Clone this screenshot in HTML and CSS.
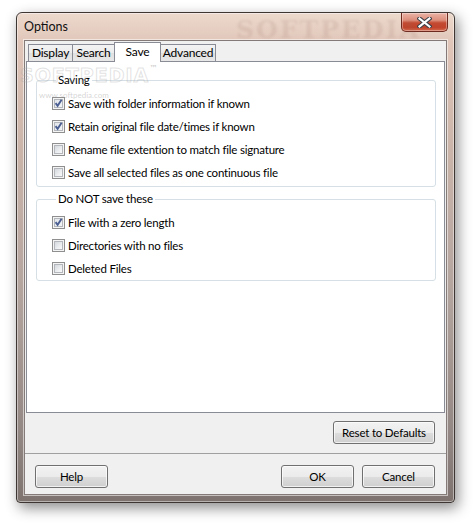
FILE: index.html
```html
<!DOCTYPE html>
<html>
<head>
<meta charset="utf-8">
<title>Options</title>
<link rel="stylesheet" href="styles.css">
</head>
<body>
<div class="window">
  <div class="titlebar">
    <span class="title">Options</span>
    <span class="wm-title">SOFTPEDIA</span>
    <div class="close">
      <svg width="15" height="11" viewBox="0 0 15 11">
        <path d="M2.5 1.5 L12.5 9.5 M12.5 1.5 L2.5 9.5" stroke="#3c4048" stroke-width="4.2" stroke-linecap="square" fill="none"/>
        <path d="M2.5 1.5 L12.5 9.5 M12.5 1.5 L2.5 9.5" stroke="#ffffff" stroke-width="2.2" stroke-linecap="square" fill="none"/>
      </svg>
    </div>
  </div>
  <div class="client">
    <div class="tabs">
      <div class="tab t-display">Display</div>
      <div class="tab t-search">Search</div>
      <div class="tab active">Save</div>
      <div class="tab t-adv">Advanced</div>
    </div>
    <div class="panel">
      <span class="wm-panel">SOFTPEDIA<sup>™</sup></span>
      <span class="wm-url">www.softpedia.com</span>
      <fieldset class="group g1">
        <legend>Saving</legend>
        <div class="row"><span class="cb checked"><svg width="13" height="13" viewBox="0 0 13 13"><path d="M3.6 6.2 L5.6 8.8 L9.6 2.8" stroke="#4b5f92" stroke-width="1.9" fill="none"/></svg></span><span>Save with folder information if known</span></div>
        <div class="row"><span class="cb checked"><svg width="13" height="13" viewBox="0 0 13 13"><path d="M3.6 6.2 L5.6 8.8 L9.6 2.8" stroke="#4b5f92" stroke-width="1.9" fill="none"/></svg></span><span>Retain original file date/times if known</span></div>
        <div class="row"><span class="cb"></span><span>Rename file extention to match file signature</span></div>
        <div class="row"><span class="cb"></span><span>Save all selected files as one continuous file</span></div>
      </fieldset>
      <fieldset class="group g2">
        <legend>Do NOT save these</legend>
        <div class="row"><span class="cb checked"><svg width="13" height="13" viewBox="0 0 13 13"><path d="M3.6 6.2 L5.6 8.8 L9.6 2.8" stroke="#4b5f92" stroke-width="1.9" fill="none"/></svg></span><span>File with a zero length</span></div>
        <div class="row"><span class="cb"></span><span>Directories with no files</span></div>
        <div class="row"><span class="cb"></span><span>Deleted Files</span></div>
      </fieldset>
    </div>
    <div class="reset-row">
      <button class="btn reset">Reset to Defaults</button>
    </div>
    <div class="footer">
      <button class="btn">Help</button>
      <div class="footer-right">
        <button class="btn">OK</button>
        <button class="btn">Cancel</button>
      </div>
    </div>
  </div>
</div>
</body>
</html>
```

FILE: styles.css
```css
* { box-sizing: border-box; }
html, body { margin: 0; padding: 0; background: #ffffff; }
body {
  font-family: Lato, "Noto Sans", sans-serif;
  font-size: 11.5px;
  letter-spacing: -0.2px;
  color: #000;
  width: 475px;
  height: 524px;
  overflow: hidden;
}
.window {
  margin: 12px 0 0 16px;
  width: 439px;
  height: 491px;
  border: 1px solid #3e3633;
  border-radius: 6px 6px 4px 4px;
  padding: 0 7px 7px 7px;
  background: linear-gradient(180deg, #edd9cd 0%, #e0c6b9 6%, #cdb6ab 25%, #b5a6a0 55%, #958985 85%, #7e736f 100%);
  box-shadow: inset 0 0 0 1px rgba(255,255,255,0.45), 3px 5px 14px rgba(0,0,0,0.45);
  display: flex;
  flex-direction: column;
  position: relative;
}
.titlebar {
  height: 27px;
  display: flex;
  align-items: flex-start;
  justify-content: space-between;
  position: relative;
}
.title {
  margin-top: 7px;
  font-size: 12.5px;
  letter-spacing: 0;
  line-height: 14px;
  color: #101010;
}
.wm-title {
  position: absolute;
  left: 212px;
  top: 2px;
  font-family: "DejaVu Serif", serif;
  font-weight: bold;
  font-size: 25px;
  letter-spacing: 2px;
  color: rgba(140, 100, 85, 0.13);
  filter: blur(1px);
  pointer-events: none;
}
.close {
  width: 47px;
  height: 19px;
  margin-right: -1px;
  border: 1px solid #6e2a1f;
  border-top: 0;
  border-radius: 0 0 5px 5px;
  background: linear-gradient(180deg, #eab3a6 0%, #dc8e7c 40%, #c44a32 55%, #c1432b 80%, #d46a4e 100%);
  box-shadow: inset 0 0 0 1px rgba(255,255,255,0.35);
  display: flex;
  align-items: center;
  justify-content: center;
}
.client {
  flex: 1;
  border: 1px solid #847a77;
  box-shadow: 0 0 0 1px rgba(255,255,255,0.55);
  background: #f0f0f0;
  display: flex;
  flex-direction: column;
}
.tabs {
  height: 20px;
  display: flex;
  align-items: flex-end;
  padding-left: 3px;
  position: relative;
  z-index: 2;
}
.tab {
  height: 17px;
  border: 1px solid #898c95;
  border-bottom: 0;
  margin-right: -1px;
  background: linear-gradient(180deg, #f3f3f3 0%, #ececec 50%, #e0e0e0 51%, #e8e8e8 100%);
  padding: 0;
  text-align: center;
  line-height: 16px;
  font-size: 12px;
  white-space: nowrap;
}
.t-display { width: 45px; }
.t-search { width: 43px; }
.t-adv { width: 56px; }
.tab.active {
  height: 20px;
  width: 47px;
  margin-bottom: -1px;
  background: #ffffff;
  line-height: 17px;
  position: relative;
  z-index: 3;
}
.panel {
  margin: 0 1px 0 1px;
  height: 352px;
  border: 1px solid #898c95;
  background: #ffffff;
  padding: 11px 8px 0 9px;
  position: relative;
}
.wm-panel {
  position: absolute;
  left: -7px;
  top: 2px;
  font-family: "DejaVu Sans", sans-serif;
  font-weight: bold;
  font-size: 19px;
  letter-spacing: 1px;
  color: rgba(255,255,255,0);
  -webkit-text-stroke: 1px rgba(170,170,170,0.35);
  pointer-events: none;
  z-index: 1;
}
.wm-panel sup { font-size: 8px; vertical-align: 11px; -webkit-text-stroke: 0; color: rgba(160,160,160,0.5); }
.wm-url {
  position: absolute;
  left: 12px;
  top: 28px;
  font-size: 8px;
  letter-spacing: 0;
  color: rgba(160,160,160,0.45);
  pointer-events: none;
}
.group {
  margin: 0;
  border: 1px solid #d5dfe5;
  border-radius: 3px;
  padding: 5px 0 2px 15px;
  min-width: 0;
}
.group legend {
  padding: 0 2px;
  margin-left: 4px;
  line-height: 14px;
  height: 14px;
}
.g2 { margin-top: 5px; padding-bottom: 0; }
.row {
  height: 23px;
  display: flex;
  align-items: center;
  gap: 3px;
  white-space: nowrap;
}
.cb {
  width: 13px;
  height: 13px;
  flex: none;
  border: 1px solid #8f8f8f;
  background: #f4f4f4;
  position: relative;
}
.cb::before {
  content: "";
  position: absolute;
  left: 1px; top: 1px; right: 1px; bottom: 1px;
  border: 1px solid #b3b7bb;
  background: linear-gradient(135deg, #d4d8dd 0%, #eceef0 60%, #fafafa 100%);
}
.cb.checked::before { background: linear-gradient(135deg, #e2e6ea 0%, #f4f5f6 100%); }
.cb svg { position: absolute; left: -1px; top: -1px; }
.reset-row {
  height: 41px;
  padding: 8px 11px 0 0;
  display: flex;
  justify-content: flex-end;
  align-items: flex-start;
  border-bottom: 1px solid #a0a0a0;
}
.footer {
  flex: 1;
  padding: 11px 11px 0 10px;
  display: flex;
  justify-content: space-between;
  align-items: flex-start;
}
.footer-right { display: flex; gap: 8px; }
.btn {
  font-family: inherit;
  font-size: 11.5px;
  letter-spacing: -0.2px;
  color: #000;
  width: 73px;
  height: 23px;
  padding: 0;
  border: 1px solid #707070;
  border-radius: 3px;
  background: linear-gradient(180deg, #f2f2f2 0%, #ebebeb 50%, #dddddd 51%, #cfcfcf 100%);
  box-shadow: inset 0 0 0 1px rgba(255,255,255,0.7);
  line-height: 19px;
}
.btn.reset { width: 102px; }
```
